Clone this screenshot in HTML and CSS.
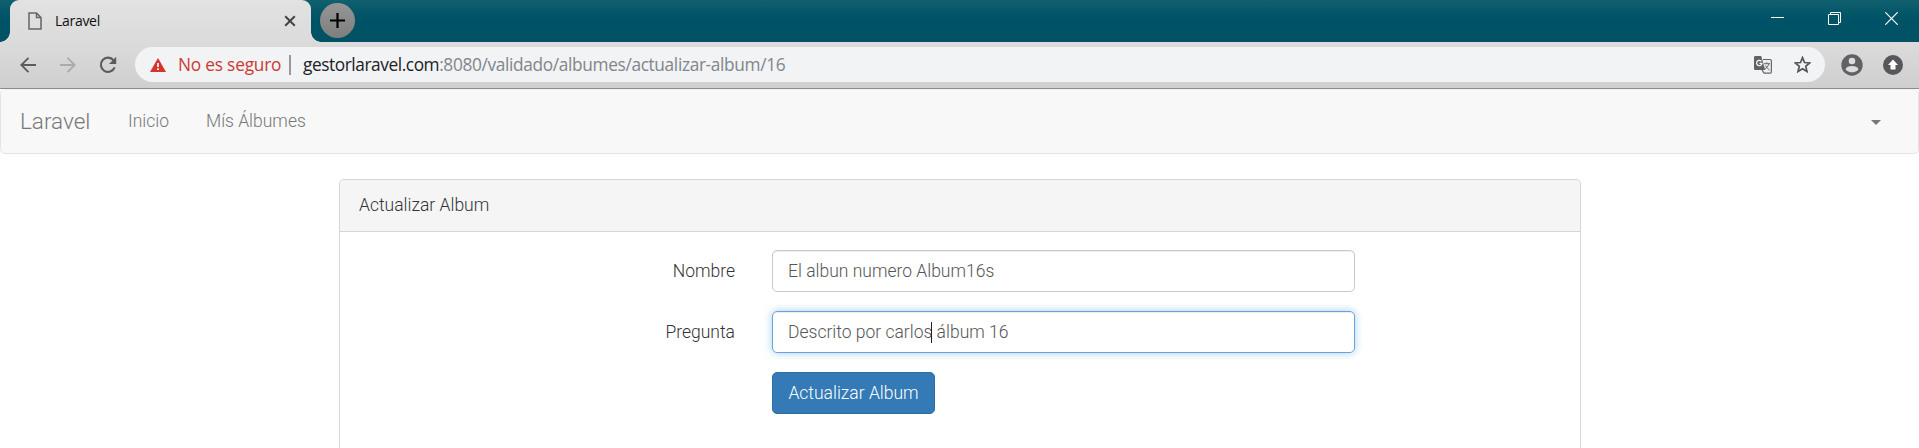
FILE: index.html
```html
<!DOCTYPE html>
<html lang="es">
<head>
<meta charset="utf-8">
<title>Laravel</title>
<link rel="stylesheet" href="styles.css">
</head>
<body>
<header class="browser">
  <div class="tabstrip">
    <div class="tab">
      <svg class="file-icon" width="14" height="18" viewBox="0 0 14 18" fill="none" stroke="#666" stroke-width="1.5"><path d="M1 1h7.5l4.5 4.500V17H1zM8.500 1v4.500H13"/></svg>
      <span class="tab-title">Laravel</span>
      <svg class="tab-close" width="12" height="12" viewBox="0 0 12 12" stroke="#444" stroke-width="2"><path d="M1.200 1.200l9.600 9.600M10.800 1.200l-9.600 9.600"/></svg>
    </div>
    <div class="new-tab"><svg width="15" height="15" viewBox="0 0 15 15" stroke="#000" stroke-width="2.200"><path d="M7.500 0v15M0 7.500h15"/></svg></div>
    <div class="window-controls">
      <svg width="13" height="13" viewBox="0 0 13 13" stroke="#fff"><path d="M0 5.500h13"/></svg>
      <svg width="13" height="13" viewBox="0 0 13 13" fill="none" stroke="#fff"><path d="M.5 2.500h10v10H.5zM2.500 2.500v-2h10v10h-2"/></svg>
      <svg width="13" height="13" viewBox="0 0 13 13" stroke="#fff" stroke-width="1.200"><path d="M.3.3l12.400 12.400M12.700.3L.3 12.700"/></svg>
    </div>
  </div>
  <div class="toolbar">
    <svg class="nav-icon" width="16" height="16" viewBox="0 0 16 16" fill="none" stroke="#5a5c60" stroke-width="1.900"><path d="M16 8H1.500M8.500 .8L1.300 8l7.200 7.200"/></svg>
    <svg class="nav-icon" width="16" height="16" viewBox="0 0 16 16" fill="none" stroke="#aaabad" stroke-width="1.900"><path d="M0 8h14.500M7.500 .8L14.700 8l-7.200 7.200"/></svg>
    <svg class="nav-icon reload" width="18" height="18" viewBox="0 0 18 18"><path d="M14.600 4.400A7.100 7.100 0 1 0 15.600 11.300" fill="none" stroke="#5a5c60" stroke-width="2.100"/><path d="M17.200 .8v7.200H10z" fill="#5a5c60"/></svg>
    <div class="omnibox">
      <svg class="warn" width="16" height="14" viewBox="0 0 16 14"><path d="M8 0l8 14H0z" fill="#d5352b"/><path d="M8 5v4M8 10.300v1.700" stroke="#fff" stroke-width="1.700"/></svg>
      <span class="unsafe">No es seguro</span>
      <span class="divider"></span>
      <span class="url"><span class="host">gestorlaravel.com</span><span class="path">:8080/validado/albumes/actualizar-album/16</span></span>
      <svg class="translate" width="18" height="18" viewBox="0 0 18 18"><path d="M9 3.500h7.200q1.200 0 1.200 1.200v11.200q0 1.200-1.200 1.200H10L8 14" fill="#eceef0" stroke="#66686c" stroke-width="1.200"/><path d="M1.300 0h5.900L11.200 14H1.300Q0 14 0 12.700V1.300Q0 0 1.300 0z" fill="#5f6368"/><path d="M7.400 5.300A2.700 2.700 0 1 0 8 7.300H5.500" fill="none" stroke="#fff" stroke-width="1.200"/><path d="M10 7.700h6M12.800 6.300v1.400M15 7.700q-1 3.500-4 5.300M11.500 9.500q1.500 3 4 4.500" fill="none" stroke="#66686c"/></svg>
      <svg class="star" width="17" height="17" viewBox="0 0 17 17"><path d="M8.500 1.600l2 4.900 5.200.4-4 3.400 1.300 5.200-4.500-2.800L4 15.500l1.300-5.200-4-3.400 5.200-.4z" fill="none" stroke="#55575b" stroke-width="1.700"/></svg>
    </div>
    <svg class="profile" width="22" height="22" viewBox="0 0 22 22"><circle cx="11" cy="11" r="10.700" fill="#5f6164"/><circle cx="11" cy="7" r="3.300" fill="#dcdcdc"/><path d="M4.500 15.200c1.300-4.200 11.700-4.200 13 0-3 4.200-10 4.200-13 0z" fill="#dcdcdc"/></svg>
    <svg class="update" width="20" height="20" viewBox="0 0 20 20"><circle cx="10" cy="10" r="10" fill="#55575b"/><path d="M10 4.600l5 5.400h-2.500v4.500h-5V10H5z" fill="#fff"/></svg>
  </div>
</header>
<nav class="navbar">
  <a class="brand">Laravel</a>
  <a class="nav-link">Inicio</a>
  <a class="nav-link albums">Mís Álbumes</a>
  <span class="caret"></span>
</nav>
<main class="panel">
  <div class="panel-heading">Actualizar Album</div>
  <form class="panel-body">
    <label class="label">Nombre</label>
    <div class="control">El albun numero Album16s</div>
    <label class="label">Pregunta</label>
    <div class="control focused">Descrito por carlos<span class="cursor"></span> álbum 16</div>
    <button class="submit" type="button">Actualizar Album</button>
  </form>
</main>
</body>
</html>
```
FILE: styles.css
```css
* { box-sizing: border-box; }
body {
  margin: 0;
  background: #fff;
  font: 300 17.5px/28px Roboto, sans-serif;
  color: #333;
}
svg { display: block; flex: none; }
.browser { font-family: "Open Sans", "Noto Sans", sans-serif; font-weight: 400; }
.tabstrip {
  display: flex;
  height: 42px;
  padding-left: 10px;
  background: linear-gradient(#11606f, #005467 16px, #005163);
}
.tab {
  position: relative;
  display: flex;
  align-items: center;
  width: 301px;
  padding: 0 15px 0 18px;
  border-radius: 9px 9px 0 0;
  background: linear-gradient(#e2e2e2, #dbdbdb);
}
.tab::before, .tab::after {
  content: "";
  position: absolute;
  bottom: 0;
  width: 10px;
  height: 10px;
}
.tab::before { left: -10px; background: radial-gradient(circle at 0 0, transparent 9.5px, #dbdbdb 10px); }
.tab::after { right: -10px; background: radial-gradient(circle at 100% 0, transparent 9.5px, #dbdbdb 10px); }
.tab-title { flex: 1; margin-left: 13px; font-size: 14px; line-height: 20px; letter-spacing: -.3px; color: #111; }
.new-tab {
  display: grid;
  place-items: center;
  width: 35px;
  height: 35px;
  margin: 3px 0 0 9px;
  border-radius: 50%;
  background: linear-gradient(#969696, #7e7e7e);
}
.window-controls { display: flex; gap: 44px; margin: 12px 21px 0 auto; }
.toolbar {
  display: flex;
  align-items: center;
  height: 47px;
  padding: 0 16px 1px 20px;
  background: linear-gradient(#dbdbdb, #cfcfcf);
  border-bottom: 1px solid #8d8d8d;
}
.nav-icon { margin-right: 24px; }
.reload { margin: 0 18px 0 -1px; }
.omnibox {
  display: flex;
  align-items: center;
  flex: 1;
  height: 35px;
  padding: 0 14px 0 15px;
  border-radius: 18px;
  background: #f1f3f4;
  font-size: 17.3px;
  line-height: 24px;
  white-space: nowrap;
}
.unsafe { width: 111px; margin-left: 12px; letter-spacing: -.2px; color: #cd3832; }
.divider { width: 2px; height: 20px; background: #999; }
.url { flex: 1; margin-left: 12px; }
.host { letter-spacing: -.43px; color: #202124; }
.path { letter-spacing: -.35px; color: #80868b; }
.translate { margin-right: 22px; }
.profile { margin-left: 16px; }
.update { margin-left: 20px; }
.navbar {
  display: flex;
  align-items: center;
  height: 65px;
  padding: 0 37px 2px 19px;
  background: #f8f8f8;
  border: 1px solid #e4e4e4;
  border-top-color: #f0f0f0;
  border-radius: 5px;
  color: #777;
}
.brand { width: 108px; font-size: 22.5px; }
.nav-link { width: 78px; }
.albums { width: auto; }
.caret {
  margin: 4px 0 0 auto;
  border: 5px solid transparent;
  border-top-color: #777;
  border-bottom: 0;
}
.panel {
  width: 1242px;
  height: 269px;
  margin: 25px 0 0 339px;
  border: 1px solid #d6d6d6;
  border-bottom: 0;
  border-radius: 5px 5px 0 0;
}
.panel-heading {
  height: 52px;
  padding: 11px 19px;
  background: #f5f5f5;
  border-bottom: 1px solid #d6d6d6;
  border-radius: 4px 4px 0 0;
}
.panel-body {
  display: grid;
  grid-template-columns: 395px 583px;
  grid-auto-rows: 42px;
  gap: 19px 37px;
  padding-top: 18px;
}
.label { padding-top: 7px; text-align: right; }
.control {
  padding: 6px 15px;
  border: 1px solid #c8cacc;
  border-radius: 5px;
  box-shadow: inset 0 1px 1px rgba(0,0,0,.075);
  color: #555;
}
.focused { border-color: #66a4da; box-shadow: inset 0 1px 1px rgba(0,0,0,.075), 0 0 9px rgba(102,175,233,.6); }
.cursor {
  display: inline-block;
  width: 1px;
  height: 21px;
  margin: 0 0 0 -1px;
  vertical-align: -5px;
  background: #222;
}
.submit {
  grid-column: 2;
  justify-self: start;
  width: 163px;
  padding: 0;
  border: 1px solid #2e6da4;
  border-radius: 5px;
  background: #337ab7;
  color: #fff;
  font: inherit;
}
```
